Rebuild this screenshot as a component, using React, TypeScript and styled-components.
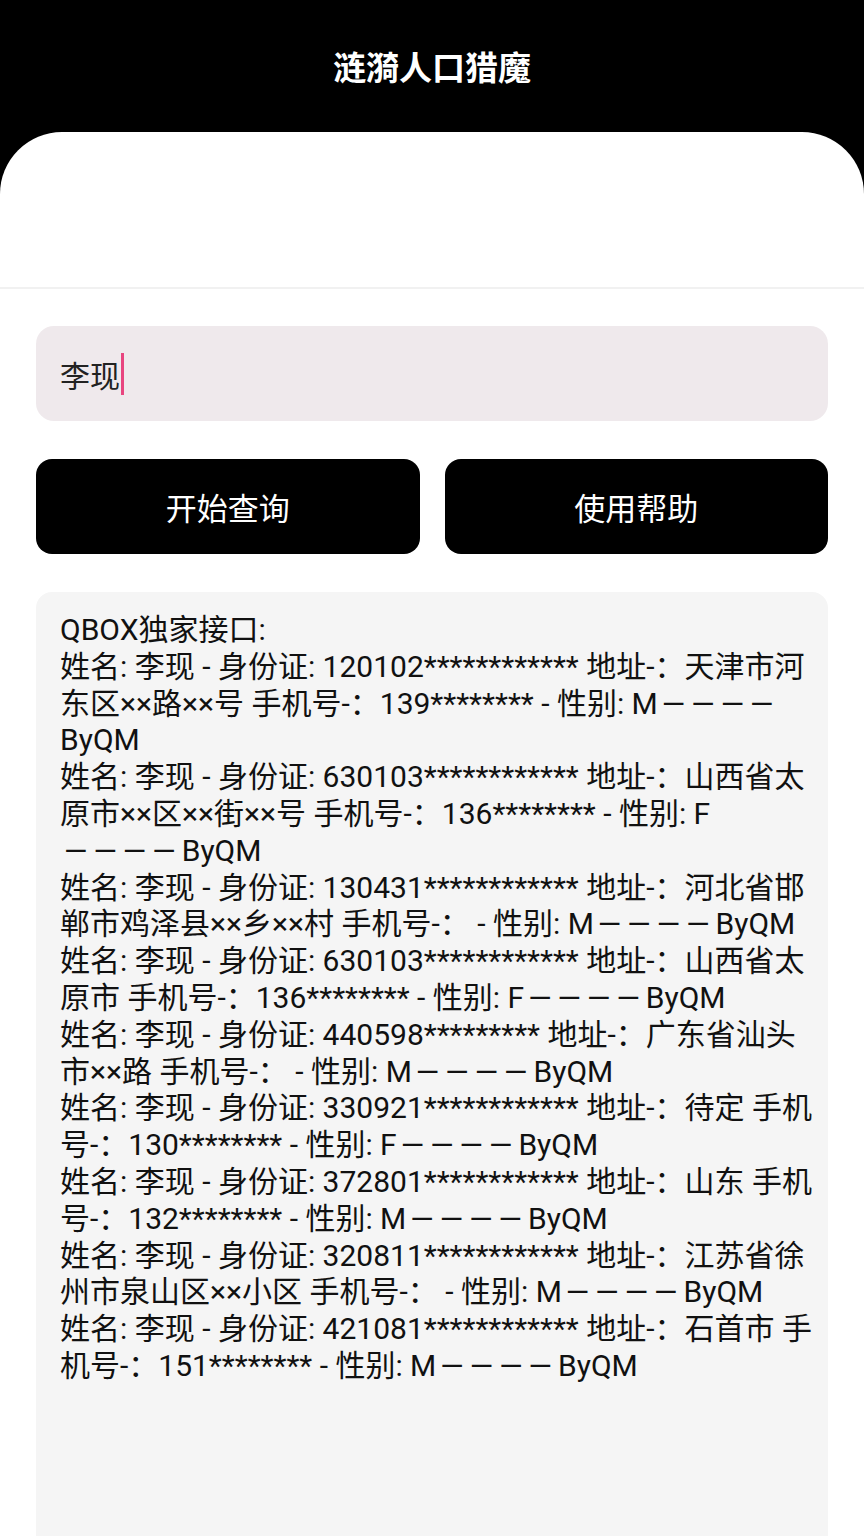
import React from 'react';
import styled, { createGlobalStyle } from 'styled-components';

const GlobalStyle = createGlobalStyle`
  html, body {
    margin: 0;
    padding: 0;
    background: #000;
    overflow: hidden;
  }
  body {
    font-family: Roboto, "Noto Sans CJK SC", sans-serif;
  }
`;

// masked sample rows (ids / phones / street details are hidden)
const records = [
  '姓名: 李现 - 身份证: 120102************ 地址-：天津市河东区××路××号 手机号-：139******** - 性别: M',
  '姓名: 李现 - 身份证: 630103************ 地址-：山西省太原市××区××街××号 手机号-：136******** - 性别: F',
  '姓名: 李现 - 身份证: 130431************ 地址-：河北省邯郸市鸡泽县××乡××村 手机号-： - 性别: M',
  '姓名: 李现 - 身份证: 630103************ 地址-：山西省太原市 手机号-：136******** - 性别: F',
  '姓名: 李现 - 身份证: 440598********* 地址-：广东省汕头市××路 手机号-： - 性别: M',
  '姓名: 李现 - 身份证: 330921************ 地址-：待定 手机号-：130******** - 性别: F',
  '姓名: 李现 - 身份证: 372801************ 地址-：山东 手机号-：132******** - 性别: M',
  '姓名: 李现 - 身份证: 320811************ 地址-：江苏省徐州市泉山区××小区 手机号-： - 性别: M',
  '姓名: 李现 - 身份证: 421081************ 地址-：石首市 手机号-：151******** - 性别: M'
];

const App = () => {
  return (
    <>
      <GlobalStyle />
      <Page>
        <Header>
          <Title>涟漪人口猎魔</Title>
        </Header>
        <Sheet>
          <TopArea />
          <Content>
            <SearchBox>
              <SearchText>李现</SearchText>
              <Caret />
            </SearchBox>
            <ButtonRow>
              <ActionButton>开始查询</ActionButton>
              <ActionButton>使用帮助</ActionButton>
            </ButtonRow>
            <ResultBox>
              <Line>QBOX独家接口:</Line>
              {records.map((r, i) => (
                <Line key={i}>
                  {r}
                  <Dashes>————</Dashes>ByQM
                </Line>
              ))}
            </ResultBox>
          </Content>
        </Sheet>
      </Page>
    </>
  );
};

const Page = styled.div`
  width: 864px;
  height: 1536px;
  display: flex;
  flex-direction: column;
  background: #000;
  overflow: hidden;
`;

const Header = styled.div`
  height: 132px;
  flex-shrink: 0;
  display: flex;
  align-items: center;
  justify-content: center;
`;

const Title = styled.div`
  color: #fff;
  font-size: 33px;
  font-weight: 700;
`;

const Sheet = styled.div`
  flex: 1;
  background: #fff;
  border-radius: 62px 62px 0 0;
  display: flex;
  flex-direction: column;
`;

const TopArea = styled.div`
  height: 155px;
  flex-shrink: 0;
  border-bottom: 2px solid #f1f1f1;
`;

const Content = styled.div`
  padding: 37px 36px 0 36px;
  display: flex;
  flex-direction: column;
  gap: 38px;
  flex: 1;
`;

const SearchBox = styled.div`
  height: 95px;
  border-radius: 18px;
  background: #efe9ec;
  display: flex;
  align-items: center;
  padding-left: 24px;
`;

const SearchText = styled.span`
  font-size: 30px;
  color: #222;
`;

const Caret = styled.span`
  width: 3px;
  height: 42px;
  background: #e8457f;
  margin-left: 1px;
`;

const ButtonRow = styled.div`
  display: grid;
  grid-template-columns: 1fr 1fr;
  gap: 25px;
`;

const ActionButton = styled.button`
  height: 95px;
  border: 0;
  border-radius: 16px;
  background: #000;
  color: #fff;
  font-family: Roboto, "Noto Sans CJK SC", sans-serif;
  font-size: 31px;
  padding: 0;
`;

const ResultBox = styled.div`
  flex: 1;
  background: #f5f5f5;
  border-radius: 16px 16px 0 0;
  padding: 20px 6px 0 24px;
  font-size: 30px;
  line-height: 36.8px;
  color: #111;
  overflow-wrap: anywhere;
`;

const Line = styled.div``;

const Dashes = styled.span`
  letter-spacing: 6px;
  margin-left: 4px;
`;

export default App;
